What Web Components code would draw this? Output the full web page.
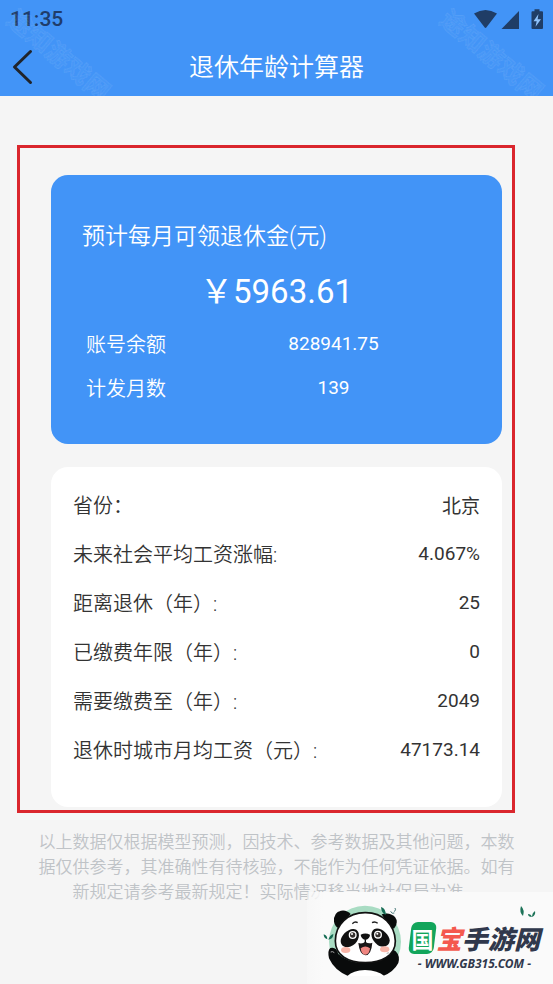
<!DOCTYPE html>
<html lang="zh-CN">
<head>
<meta charset="utf-8">
<meta name="viewport" content="width=device-width, initial-scale=1">
<title>退休年龄计算器</title>
<style>
html, body { margin: 0; }
body { background: #f5f5f5; color: #333; font-family: Roboto, "Noto Sans CJK SC", sans-serif; font-size: 20px; --blue: #4294f7; --cjk-weight: 350; }
</style>
</head>
<body>
<pension-page></pension-page>
<script>
const define = (name, html) => customElements.define(name, class extends HTMLElement {
  constructor() {
    super();
    const t = document.createElement('template');
    t.innerHTML = html;
    this.attachShadow({ mode: 'open' }).append(t.content.cloneNode(true));
  }
});

define('status-bar', `
<style>
:host { display: flex; align-items: center; justify-content: space-between; height: 38px; padding: 0 10px; color: #1f3d6b; }
time { font-size: 21px; font-weight: 500; line-height: 24px; }
svg { display: block; }
</style>
<time>11:35</time>
<svg width="70" height="22" viewBox="473 7 70 22" fill="#1f3d66" role="img" aria-label="Wi-Fi, 信号, 充电中">
  <path d="M474 12.5Q485.500 5.500 497 12.500L486.500 26.300Q485.500 27.500 484.500 26.300Z"/>
  <path d="M519 10V28H501.500Z"/>
  <path d="M534.500 8.300H539.500V10.300H542Q543 10.300 543 11.300V27Q543 28 542 28H532.500Q531.500 28 531.500 27V11.300Q531.500 10.300 532.500 10.300H534.500Z"/>
  <path d="M538.500 13L533.500 20.300H536.700L535.500 25.800L541 18.300H537.600Z" fill="#8ec2fb"/>
</svg>`);

define('water-mark', `
<style>
:host { display: block; width: 120px; height: 112px; pointer-events: none; }
svg { display: block; }
text { font: 700 25px "Noto Sans CJK SC", sans-serif; fill: rgba(255,255,255,.03); stroke: rgba(255,255,255,.09); stroke-width: 1px; }
</style>
<svg width="120" height="112" viewBox="0 0 120 112" aria-hidden="true"><text transform="translate(5 22) rotate(40)">途知游戏网</text></svg>`);

define('app-header', `
<style>
:host { display: block; position: relative; background: var(--blue); }
water-mark { position: absolute; top: 0; left: 0; }
water-mark.end { left: auto; right: 0; }
nav { display: grid; grid-template-columns: 44px 1fr 44px; align-items: center; height: 58px; }
button { border: 0; background: none; padding: 0 0 0 12px; height: 44px; cursor: pointer; }
button svg { display: block; }
h1 { margin: 0; padding-top: 2px; text-align: center; color: #fff; font-size: 25px; line-height: 36px; font-weight: var(--cjk-weight); }
</style>
<water-mark></water-mark><water-mark class="end"></water-mark>
<status-bar></status-bar>
<nav>
  <button type="button" aria-label="返回"><svg width="22" height="36" viewBox="0 0 22 36" fill="none" stroke="#20242b" stroke-width="3" stroke-linecap="round" stroke-linejoin="round"><path d="M18.500 2.500L2.500 18L18.500 33.500"/></svg></button>
  <h1><slot></slot></h1>
</nav>`);

define('summary-row', `
<style>
:host { display: grid; grid-template-columns: 2fr 5fr; align-items: center; height: 44px; padding-left: 4px; }
.label { font-weight: var(--cjk-weight); }
.value { text-align: center; font-size: 19px; }
</style>
<span class="label"><slot name="label"></slot></span><span class="value"><slot></slot></span>`);

define('pension-card', `
<style>
:host { display: block; background: var(--blue); color: #fff; border-radius: 17px; padding: 47px 31px 35px; }
h2 { margin: 0 0 16px; font-size: 23px; line-height: 30px; font-weight: var(--cjk-weight); }
.amount { margin: 0 0 5px; text-align: center; font-size: 33px; line-height: 48px; }
</style>
<h2><slot name="title"></slot></h2>
<p class="amount"><slot name="amount"></slot></p>
<slot></slot>`);

define('detail-row', `
<style>
:host { display: flex; align-items: center; justify-content: space-between; height: 49px; }
.label { font-weight: var(--cjk-weight); }
.value { font-size: 19px; }
</style>
<span class="label"><slot name="label"></slot></span><span class="value"><slot></slot></span>`);

define('detail-card', `
<style>
:host { display: block; background: #fff; border-radius: 17px; padding: 13px 22px 33px; }
</style>
<slot></slot>`);

define('result-frame', `
<style>
:host { display: flex; flex-direction: column; gap: 23px; border: 3px solid #da262d; padding: 27px 10px 3px 31px; }
</style>
<slot></slot>`);

define('site-logo', `
<style>
:host { display: flex; align-items: center; gap: 4px; box-sizing: border-box; width: 246px; height: 92px; padding: 4px 11px 0 16px; background: linear-gradient(90deg, rgba(250,250,250,.5), #fafafa 16px); }
svg { display: block; flex: none; }
.brand { position: relative; display: flex; flex-direction: column; align-items: center; flex: 1; padding-top: 12px; white-space: nowrap; font-family: "Noto Sans CJK SC", sans-serif; }
.leaf { position: absolute; right: 6px; top: -3px; }
.name { display: flex; align-items: center; font-size: 26px; line-height: 36px; font-weight: 900; font-style: italic; color: #30384c; }
.guo { position: relative; z-index: 0; width: 27px; text-align: center; font-size: 22px; line-height: 32px; font-style: normal; font-weight: 700; color: #fff; }
.guo::before { content: ""; position: absolute; z-index: -1; inset: 0 1px; background: #12a55b; border-radius: 6px; transform: skewX(-7deg); }
.bao { color: #f4594e; }
.url { font: italic 700 12px/16px "Noto Sans", "Noto Sans CJK SC", sans-serif; color: #30384c; text-decoration: none; }
</style>
<svg width="80" height="75" viewBox="70 60 240 225" role="img" aria-label="熊猫">
  <circle cx="196" cy="176" r="108" fill="#a9dcc3"/>
  <path d="M60 279H332V300H60Z" fill="#fafafa"/>
  <path d="M103 116Q101 88 124 83Q141 80 153 93L118 136Q106 131 103 116Z" fill="#090b0b"/>
  <path d="M246 94Q270 86 286 102Q298 118 284 136L274 139Z" fill="#090b0b"/>
  <path d="M92 195Q110 190 116 213Q145 240 196 240Q238 238 250 206Q270 190 288 205Q302 219 296 240Q282 267 250 279H145Q104 262 88 226Q83 202 92 195Z" fill="#090b0b"/>
  <path d="M143 279Q160 262 196 261Q235 262 254 279Z" fill="#fff"/>
  <path d="M196 89C250 88 285 126 287 174C288 219 243 239 197 239C145 239 107 217 107 174C107 124 145 89 196 89Z" fill="#fff" stroke="#111" stroke-width="5"/>
  <path d="M170 140C184 150 178 175 160 187C143 198 124 193 123 174C123 155 151 130 170 140Z" fill="#111"/>
  <path d="M223 139C209 149 215 172 233 185C250 197 270 190 270 172C269 153 240 129 223 139Z" fill="#111"/>
  <circle cx="159" cy="156" r="12" fill="#fff"/><circle cx="235" cy="155" r="12" fill="#fff"/>
  <circle cx="159" cy="156" r="8" fill="#35302e"/><circle cx="235" cy="155" r="8" fill="#35302e"/>
  <circle cx="157" cy="153" r="3" fill="#fff"/><circle cx="233" cy="152" r="3" fill="#fff"/>
  <path d="M158 122Q166 114 174 119M217 119Q226 114 234 121" stroke="#222" stroke-width="4" fill="none"/>
  <ellipse cx="138" cy="201" rx="14" ry="9" fill="#f9b5a8"/><ellipse cx="255" cy="199" rx="14" ry="9" fill="#f9b5a8"/>
  <path d="M176 180Q188 184 197 176Q207 184 218 179Q215 216 197 217Q180 216 176 180Z" fill="#1b1718"/>
  <path d="M183 196Q197 185 211 196Q209 215 197 215Q185 215 183 196Z" fill="#ef8580"/>
  <path d="M183 155Q197 148 211 155Q211 166 197 171Q184 166 183 155ZM195 168H199V180H195Z" fill="#111"/>
  <path d="M244 72Q259 77 258 96Q245 90 244 72ZM101 153Q101 168 86 170Q90 157 101 153ZM72 154Q83 157 83 169Q72 166 72 154Z" fill="#176d55"/>
  <path d="M273 85Q277 94 284 90M286 75Q290 80 284 86" stroke="#477" stroke-width="3" fill="none"/>
  <path d="M93 207Q99 204 104 209M261 211Q267 207 271 213" stroke="#aaa" stroke-width="3" fill="none"/>
</svg>
<div class="brand">
  <svg class="leaf" width="18" height="14" viewBox="0 0 18 14" fill="#1d7358" aria-hidden="true"><path d="M3 1Q7 5 5 11Q1 7 3 1ZM10 9Q13 9 14 12Q10 12 10 9ZM17 6Q18 10 14 12Q14 8 17 6Z"/></svg>
  <div class="name"><span class="guo">国</span><span class="bao">宝</span><span>手游网</span></div>
  <a class="url" href="#">- WWW.GB315.COM -</a>
</div>`);

define('pension-page', `
<style>
:host { display: flex; flex-direction: column; position: relative; min-height: 100vh; }
main { padding: 49px 38px 40px 17px; }
.note { margin: 17px 0 0 21px; font-size: 17px; line-height: 25px; font-weight: var(--cjk-weight); color: #bfc3c7; text-align: center; }
site-logo { position: absolute; right: 0; bottom: 0; }
</style>
<app-header>退休年龄计算器</app-header>
<main>
  <result-frame>
    <pension-card>
      <span slot="title">预计每月可领退休金(元)</span>
      <span slot="amount">￥5963.61</span>
      <summary-row><span slot="label">账号余额</span>828941.75</summary-row>
      <summary-row><span slot="label">计发月数</span>139</summary-row>
    </pension-card>
    <detail-card>
      <detail-row><span slot="label">省份：</span>北京</detail-row>
      <detail-row><span slot="label">未来社会平均工资涨幅:</span>4.067%</detail-row>
      <detail-row><span slot="label">距离退休（年）:</span>25</detail-row>
      <detail-row><span slot="label">已缴费年限（年）:</span>0</detail-row>
      <detail-row><span slot="label">需要缴费至（年）:</span>2049</detail-row>
      <detail-row><span slot="label">退休时城市月均工资（元）:</span>47173.14</detail-row>
    </detail-card>
  </result-frame>
  <p class="note">以上数据仅根据模型预测，因技术、参考数据及其他问题，本数据仅供参考，其准确性有待核验，不能作为任何凭证依据。如有新规定请参考最新规定！实际情况移当地社保局为准。</p>
</main>
<site-logo></site-logo>`);
</script>
</body>
</html>
